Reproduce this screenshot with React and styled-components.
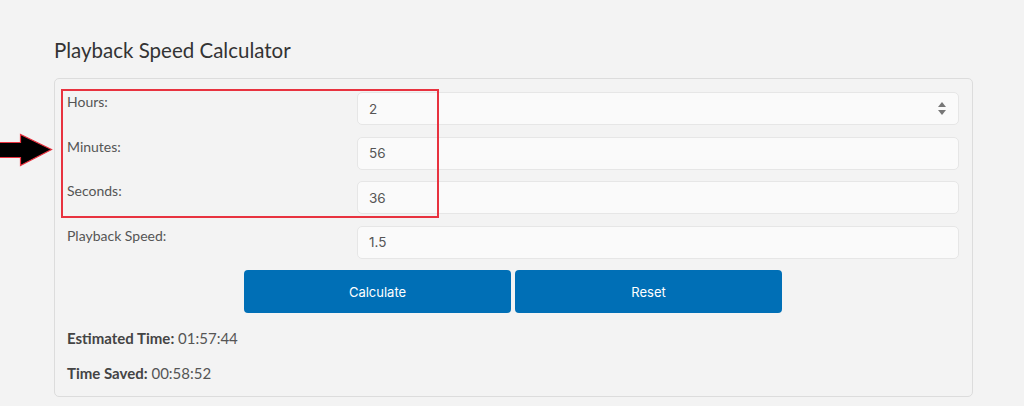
import React from 'react';
import styled, { createGlobalStyle } from 'styled-components';

const GlobalStyle = createGlobalStyle`
	body {
		margin: 0;
		background: #f3f3f3;
		font-family: 'Lato', 'Liberation Sans', sans-serif;
		color: #555;
	}
`;

const Page = styled.div`
	position: relative;
	padding: 38px 51px 10px 54px;
`;

const Title = styled.h2`
	margin: 0 0 15px;
	font-size: 20.5px;
	font-weight: 400;
	line-height: 25px;
	color: #333;
`;

const Card = styled.div`
	position: relative;
	border: 1px solid #dcdcdc;
	border-radius: 5px;
	padding: 13px 13px 8px 12px;
`;

const Form = styled.div`
	display: grid;
	grid-template-columns: 290px 1fr;
	row-gap: 11.5px;
`;

const Label = styled.label`
	padding: 2px 0 0 0;
	font-size: 14px;
	line-height: 16px;
	color: #555;
`;

const Field = styled.div`
	position: relative;
`;

const Input = styled.input`
	box-sizing: border-box;
	width: 100%;
	height: 33px;
	padding: 0 11px;
	border: 1px solid #e6e6e6;
	border-radius: 5px;
	background: #fafafa;
	font-family: 'Inter', 'Liberation Sans', sans-serif;
	font-size: 13.5px;
	color: #555;
	outline: none;
`;

const Spinner = styled.svg`
	position: absolute;
	right: 13px;
	top: 10px;
`;

const Buttons = styled.div`
	display: flex;
	justify-content: center;
	gap: 4px;
	margin-top: 11.5px;
`;

const Button = styled.button`
	width: 267px;
	height: 43px;
	border: none;
	border-radius: 4px;
	background: #006fb6;
	color: #fff;
	font-family: 'Inter', 'Liberation Sans', sans-serif;
	font-size: 13px;
`;

const Results = styled.div`
	display: flex;
	flex-direction: column;
	gap: 19px;
	margin-top: 17px;
	padding-bottom: 7px;
`;

const Result = styled.p`
	margin: 0;
	font-size: 15px;
	line-height: 16px;
	color: #555;

	b {
		color: #444;
		font-weight: 700;
	}
`;

const Highlight = styled.div`
	position: absolute;
	z-index: 1;
	left: 6px;
	top: 10px;
	width: 374px;
	height: 125px;
	border: 2px solid #e8323f;
	pointer-events: none;
`;

const Arrow = styled.svg`
	position: absolute;
	left: 0;
	top: 132px;
`;

const rows = [
	{ label: 'Hours:', value: '2', spin: true },
	{ label: 'Minutes:', value: '56' },
	{ label: 'Seconds:', value: '36' },
	{ label: 'Playback Speed:', value: '1.5' }
];

export default function App() {
	return (
		<>
			<GlobalStyle />
			<Page>
				<Arrow width="54" height="36" viewBox="0 0 54 36">
					<path
						d="M-1 10.5 H20.5 V2.5 L51.5 17.5 L20.5 33.5 V25.5 H-1 Z"
						fill="#000"
						stroke="#e8323f"
						strokeWidth="1.2"
					/>
				</Arrow>
				<Title>Playback Speed Calculator</Title>
				<Card>
					<Highlight />
					<Form>
						{rows.map(({ label, value, spin }) => (
							<React.Fragment key={label}>
								<Label>{label}</Label>
								<Field>
									<Input type="text" defaultValue={value} />
									{spin && (
										<Spinner width="8" height="13" viewBox="0 0 8 13">
											<path d="M4 0 L8 5 H0 Z" fill="#777" />
											<path d="M4 13 L8 8 H0 Z" fill="#777" />
										</Spinner>
									)}
								</Field>
							</React.Fragment>
						))}
					</Form>
					<Buttons>
						<Button>Calculate</Button>
						<Button>Reset</Button>
					</Buttons>
					<Results>
						<Result>
							<b>Estimated Time:</b> 01:57:44
						</Result>
						<Result>
							<b>Time Saved:</b> 00:58:52
						</Result>
					</Results>
				</Card>
			</Page>
		</>
	);
}
